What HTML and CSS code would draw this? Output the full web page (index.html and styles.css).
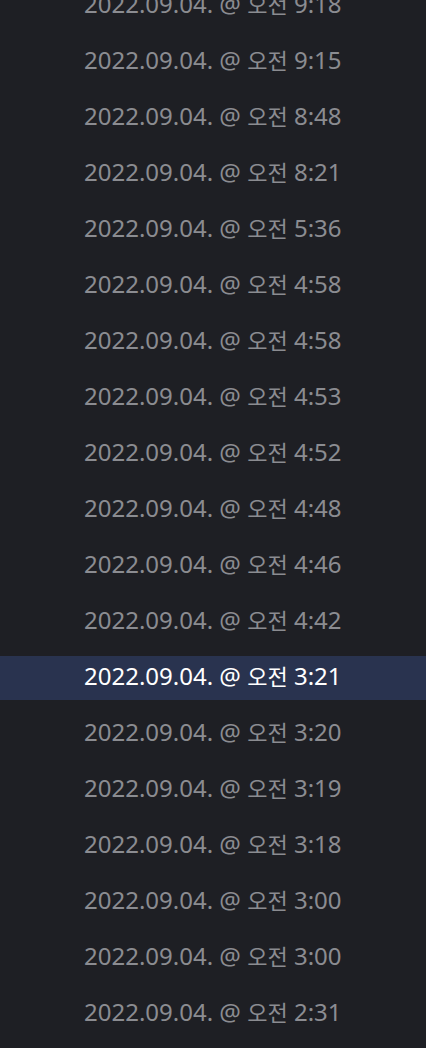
FILE: index.html
```html
<!DOCTYPE html>
<html lang="ko">
<head>
  <meta charset="UTF-8" />
  <meta name="viewport" content="width=device-width, initial-scale=1.0"/>
  <title>기록</title>
  <link rel="stylesheet" href="styles.css">
</head>
<body>
  <ul class="history">
    <li class="entry">2022.09.04. @ <span class="ampm">오전</span> 9:18</li>
    <li class="entry">2022.09.04. @ <span class="ampm">오전</span> 9:15</li>
    <li class="entry">2022.09.04. @ <span class="ampm">오전</span> 8:48</li>
    <li class="entry">2022.09.04. @ <span class="ampm">오전</span> 8:21</li>
    <li class="entry">2022.09.04. @ <span class="ampm">오전</span> 5:36</li>
    <li class="entry">2022.09.04. @ <span class="ampm">오전</span> 4:58</li>
    <li class="entry">2022.09.04. @ <span class="ampm">오전</span> 4:58</li>
    <li class="entry">2022.09.04. @ <span class="ampm">오전</span> 4:53</li>
    <li class="entry">2022.09.04. @ <span class="ampm">오전</span> 4:52</li>
    <li class="entry">2022.09.04. @ <span class="ampm">오전</span> 4:48</li>
    <li class="entry">2022.09.04. @ <span class="ampm">오전</span> 4:46</li>
    <li class="entry">2022.09.04. @ <span class="ampm">오전</span> 4:42</li>
    <li class="entry active">2022.09.04. @ <span class="ampm">오전</span> 3:21</li>
    <li class="entry">2022.09.04. @ <span class="ampm">오전</span> 3:20</li>
    <li class="entry">2022.09.04. @ <span class="ampm">오전</span> 3:19</li>
    <li class="entry">2022.09.04. @ <span class="ampm">오전</span> 3:18</li>
    <li class="entry">2022.09.04. @ <span class="ampm">오전</span> 3:00</li>
    <li class="entry">2022.09.04. @ <span class="ampm">오전</span> 3:00</li>
    <li class="entry">2022.09.04. @ <span class="ampm">오전</span> 2:31</li>
  </ul>
</body>
</html>
```

FILE: styles.css
```css
* {
  box-sizing: border-box;
}

html, body {
  height: 100%;
}

body {
  margin: 0;
  overflow: hidden;
  background: #1e1f24;
  font-family: 'Noto Sans', 'Noto Sans CJK KR', sans-serif;
}

/* list is scrolled a little, first row is cut at the top */
.history {
  list-style: none;
  margin: -16px 0 0;
  padding: 0;
  display: flex;
  flex-direction: column;
  gap: 12px;
}

.entry {
  height: 44px;
  padding: 0 0 4px 84px;
  font-size: 24px;
  line-height: 40px;
  color: #8b8c91;
  white-space: nowrap;
}

.ampm {
  font-size: 22px;
}

.entry.active {
  background: #29334f;
  color: #fff;
}
```
